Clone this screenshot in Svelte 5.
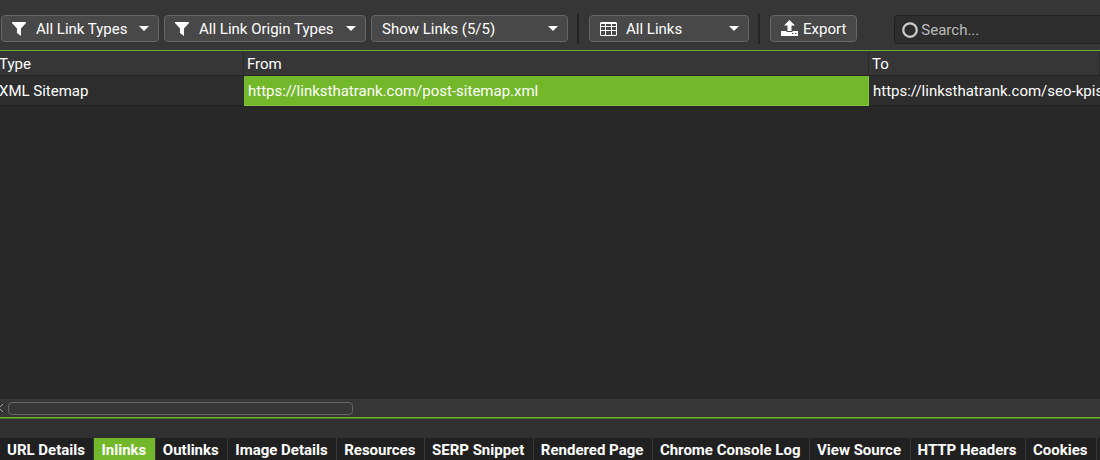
<script lang="ts">
	type Filter = {
		label: string
		icon?: 'funnel' | 'grid'
		size: string
	}

	const linkFilters: Filter[] = [
		{ label: 'All Link Types', icon: 'funnel', size: 'small' },
		{ label: 'All Link Origin Types', icon: 'funnel', size: 'large' },
		{ label: 'Show Links (5/5)', size: 'wide' }
	]
	const columnFilter: Filter = { label: 'All Links', icon: 'grid', size: 'medium' }

	const rows = [
		{
			type: 'XML Sitemap',
			from: 'https://linksthatrank.com/post-sitemap.xml',
			to: 'https://linksthatrank.com/seo-kpis'
		}
	]

	const tabs = [
		'URL Details',
		'Inlinks',
		'Outlinks',
		'Image Details',
		'Resources',
		'SERP Snippet',
		'Rendered Page',
		'Chrome Console Log',
		'View Source',
		'HTTP Headers',
		'Cookies'
	]

	let activeTab = $state('Inlinks')
	let search = $state('')
</script>

{#snippet dropdown(filter: Filter)}
	<div class="dropdown {filter.size}">
		{#if filter.icon === 'funnel'}
			<svg class="icon" width="14" height="14" viewBox="0 0 14 14" aria-hidden="true">
				<path d="M0 0h14v1L9 6.500v7.500L5 11V6.500L0 1z" fill="#fff" />
			</svg>
		{:else if filter.icon === 'grid'}
			<svg class="icon" width="17" height="14" viewBox="0 0 17 14" aria-hidden="true">
				<path d="M1 0h15l1 1v12l-1 1H1l-1-1V1zM1 2v2h4V2zM6 2v2h5V2zM12 2v2h4V2zM1 5v3h4V5zM6 5v3h5V5zM12 5v3h4V5zM1 9v4h4V9zM6 9v4h5V9zM12 9v4h4V9z" fill="#fff" fill-rule="evenodd" />
			</svg>
		{/if}
		<select class={filter.icon} aria-label={filter.label}>
			<option>{filter.label}</option>
		</select>
		<svg class="caret" width="10" height="5" viewBox="0 0 10 5" aria-hidden="true">
			<path d="M0 0h10L5 5z" fill="#fff" />
		</svg>
	</div>
{/snippet}

<div class="panel">
	<div class="toolbar">
		{#each linkFilters as filter}
			{@render dropdown(filter)}
		{/each}
		<span class="separator"></span>
		{@render dropdown(columnFilter)}
		<span class="separator"></span>
		<button class="export">
			<svg width="17" height="16" viewBox="0 0 17 16" aria-hidden="true">
				<path d="M8.500 0L14 5.500h-3.500V11h-4V5.500H3z" fill="#fff" />
				<path d="M0 11h5.500v1h6v-1H17v5H0z" fill="#fff" />
				<path d="M11 13.500h1.500M14 13.500h1.500" stroke="#484848" />
			</svg>
			Export
		</button>
		<label class="search">
			<svg width="16" height="16" viewBox="0 0 16 16" aria-hidden="true">
				<circle cx="8" cy="8" r="6.750" fill="none" stroke="#ccc" stroke-width="2.250" />
			</svg>
			<input type="text" placeholder="Search..." aria-label="Search" bind:value={search} />
		</label>
	</div>

	<div class="grid">
		<table>
			<colgroup>
				<col class="type" />
				<col class="from" />
				<col />
			</colgroup>
			<thead>
				<tr>
					<th>Type</th>
					<th>From</th>
					<th>To</th>
				</tr>
			</thead>
			<tbody>
				{#each rows as row}
					<tr>
						<td>{row.type}</td>
						<td class="selected">{row.from}</td>
						<td>{row.to}</td>
					</tr>
				{/each}
			</tbody>
		</table>
	</div>

	<div class="scrollbar">
		<button class="scroll-left" aria-label="Scroll left">
			<svg width="3" height="10" viewBox="0 0 3 10" aria-hidden="true">
				<path d="M3 1L-1 5l4 4" fill="none" stroke="#999" />
			</svg>
		</button>
		<div class="thumb"></div>
	</div>

	<div class="tabs">
		<div class="strip" role="tablist">
			{#each tabs as tab}
				<button role="tab" class:active={tab === activeTab} aria-selected={tab === activeTab} onclick={() => (activeTab = tab)}>{tab}</button>
			{/each}
		</div>
	</div>
</div>

<style>
	:global(body) {
		background: #282828;
	}

	.panel {
		display: flex;
		flex-direction: column;
		height: 100vh;
		overflow: hidden;
		font-family: Roboto, sans-serif;
		font-size: 15px;
		color: #fff;
	}

	button,
	select,
	input {
		margin: 0;
		font: inherit;
		color: inherit;
	}

	.toolbar {
		display: flex;
		flex: none;
		align-items: flex-start;
		gap: 5px;
		padding: 15px 0 6px 1px;
		background: #363636;
		border-bottom: 1px solid #6fb02b;
	}

	.dropdown {
		position: relative;
		flex: none;
	}

	.small {
		width: 158px;
	}

	.medium {
		width: 160px;
	}

	.wide {
		width: 197px;
	}

	.large {
		width: 202px;
	}

	.icon {
		position: absolute;
		top: 7px;
		left: 11px;
		pointer-events: none;
	}

	.caret {
		position: absolute;
		top: 11px;
		right: 10px;
		pointer-events: none;
	}

	select,
	.export {
		height: 27px;
		background: #484848;
		border: 1px solid #666;
		border-radius: 4px;
	}

	select {
		display: block;
		width: 100%;
		padding: 0 24px 0 10px;
		appearance: none;
	}

	select.funnel {
		padding-left: 34px;
	}

	select.grid {
		padding-left: 36px;
	}

	.separator {
		flex: none;
		width: 2px;
		height: 30px;
		margin: -1px 5px 0 4px;
		background: #232323;
	}

	.export {
		display: flex;
		flex: none;
		align-items: center;
		gap: 5px;
		padding: 0 10px;
	}

	.export svg {
		flex: none;
		margin-bottom: 2px;
	}

	.search {
		display: flex;
		flex: 1;
		align-items: center;
		gap: 3px;
		height: 27px;
		margin-left: 32px;
		padding-left: 7px;
		background: #2d2d2d;
		border: 1px solid #222;
		border-right: 0;
		border-radius: 4px 0 0 4px;
	}

	.search svg {
		flex: none;
	}

	.search input {
		flex: 1;
		min-width: 0;
		padding: 0;
		background: none;
		border: 0;
		outline: 0;
	}

	.search input::placeholder {
		color: #bbb;
		opacity: 1;
	}

	div.grid {
		flex: 1;
		min-height: 0;
		overflow: hidden;
		background: #282828;
	}

	/* the view is scrolled a few pixels into the first column */
	table {
		width: calc(100% + 4px);
		margin-left: -4px;
		table-layout: fixed;
		border-collapse: separate;
		border-spacing: 0;
	}

	.type {
		width: 248px;
	}

	.from {
		width: 625px;
	}

	th,
	td {
		box-sizing: border-box;
		overflow: hidden;
		text-align: left;
		font-weight: 400;
		white-space: nowrap;
		border-bottom: 1px solid #232323;
	}

	th {
		height: 25px;
		padding: 2px 3px 0;
		background: #363636;
		box-shadow: inset -1px 0 #292929;
	}

	td {
		height: 30px;
		padding: 0 4px;
		background: #2d2d2d;
	}

	td:first-child {
		padding-left: 3px;
	}

	td.selected {
		background: #73b72b;
		border: 1px solid #83c441;
		border-width: 0 1px 1px 0;
	}

	.scrollbar {
		display: flex;
		flex: none;
		align-items: center;
		gap: 5px;
		height: 18px;
		background: #363636;
		border-bottom: 1px solid #6fb02b;
	}

	.scroll-left {
		display: flex;
		padding: 0;
		background: none;
		border: 0;
	}

	.thumb {
		box-sizing: border-box;
		width: 345px;
		height: 13px;
		border: 1px solid #666;
		border-radius: 4px;
	}

	.tabs {
		flex: none;
		padding-top: 19px;
		background: #303030;
		border-top: 1px solid #477a20;
	}

	.strip {
		display: flex;
		padding-right: 3px;
		overflow: hidden;
		background: #202020;
	}

	.strip button {
		flex: 1 0 auto;
		height: 22px;
		padding: 2px 7px 0;
		font-weight: 700;
		text-align: left;
		white-space: nowrap;
		background: #202020;
		border: 0;
		border-right: 1px solid #363636;
	}

	.strip button.active {
		background: #73b72b;
	}
</style>
